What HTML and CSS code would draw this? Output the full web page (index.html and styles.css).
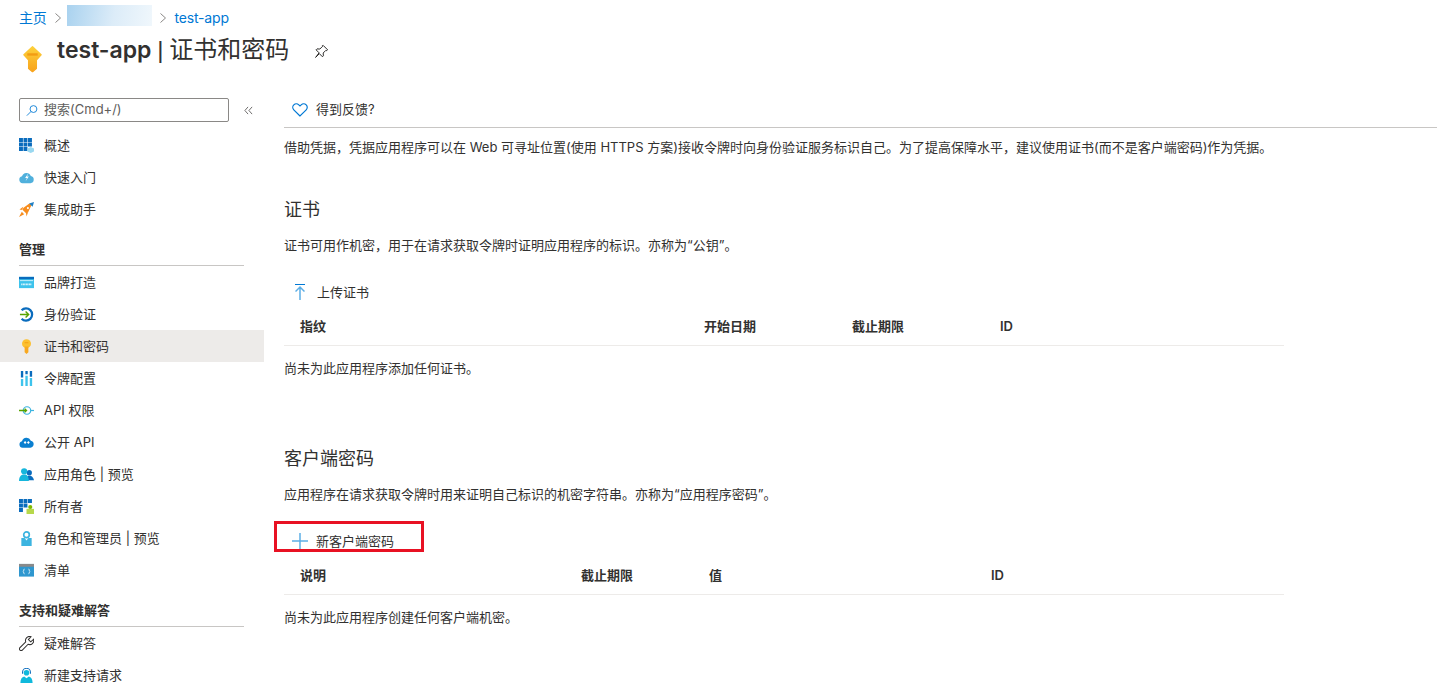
FILE: index.html
```html
<!DOCTYPE html>
<html lang="zh-CN">
<head>
    <meta charset="UTF-8">
    <meta name="viewport" content="width=device-width, initial-scale=1.0">
    <title>test-app | 证书和密码</title>
    <link rel="stylesheet" href="styles.css">
</head>
<body>
    <nav class="breadcrumb">
        <a href="#">主页</a>
        <svg class="crumb-sep" viewBox="0 0 8 12"><path d="M1.500 1.500 6.500 6l-5 4.500" /></svg>
        <span class="crumb-blur"></span>
        <svg class="crumb-sep" viewBox="0 0 8 12"><path d="M1.500 1.500 6.500 6l-5 4.500" /></svg>
        <a href="#">test-app</a>
    </nav>

    <header class="page-head">
        <svg class="head-key" viewBox="0 0 20 28">
            <defs>
                <linearGradient id="keyfill" x1="0" y1="0" x2="0" y2="1">
                    <stop offset="0" stop-color="#fdd03a" />
                    <stop offset="1" stop-color="#f8a31c" />
                </linearGradient>
            </defs>
            <path fill="url(#keyfill)" stroke="url(#keyfill)" stroke-linejoin="round" stroke-width="1.500" d="M10 1 19 9.500 14 15V24l-4 3.300L6 24V15L1 9.500z" />
            <rect x="4.500" y="8" width="11" height="2.500" fill="#f39c12" />
        </svg>
        <h1><b>test-app</b> <span class="pipe">|</span> 证书和密码</h1>
        <svg class="head-pin" viewBox="0 0 16 16"><path d="M9.800 1.500 14.500 6.200 13.600 7l-1-.2-2.800 2.800.2 3-1 1-3.300-3.300L1.700 14.300l3.700-4.900L2.200 6.200l1-1 3 .2L9 2.600 8.800 1.900z" /></svg>
    </header>

    <div class="layout">
        <aside class="sidebar">
            <div class="search-row">
                <div class="search">
                    <svg class="search-icon" viewBox="0 0 14 14"><circle cx="8.700" cy="5.300" r="4" /><path d="M5.800 8.200 1 13" /></svg>
                    <span>搜索(Cmd+/)</span>
                </div>
                <svg class="collapse" viewBox="0 0 10 10"><path d="M4.500 1 1 5l3.500 4M9 1 5.500 5 9 9" /></svg>
            </div>

            <a class="nav-item" href="#">
                <svg viewBox="0 0 16 16"><path fill="#0a6cbd" d="M0 0h4.200v4.200H0zM4.800 0H9v4.200H4.800zM9.600 0h4.200v4.200H9.600zM0 4.800h4.200V9H0zM4.800 4.800H9V9H4.800zM9.600 4.800h4.200V9H9.600zM0 9.600h4.200v4.200H0zM4.800 9.600H9v4.200H4.800z" /><path fill="#9ad8f0" d="m12.500 9.500 3.500 1.800v3L12.500 16 9 14.300v-3z" /></svg>
                概述
            </a>
            <a class="nav-item" href="#">
                <svg viewBox="0 0 16 16"><path fill="#50b0dc" d="M3.800 14a3.700 3.700 0 0 1-.6-7.300A5 5 0 0 1 12.600 6.300 3.900 3.900 0 0 1 12.200 14z" /><path fill="#fff" d="M10 3.500 6.500 8.500h2l-1.500 3.500 3.500-5h-2z" /></svg>
                快速入门
            </a>
            <a class="nav-item" href="#">
                <svg viewBox="0 0 16 16"><path fill="#f78d1e" d="M4.500 6.500 11 1.500 13.500 3 9.500 11.500 7.500 12 4 8.500zM4.500 5 .5 8 3.500 8.500zM11 7.500 8 15.500 7.500 12zM3 10.500l2.500 2.500L0 16z" /><path fill="#1f7fc4" d="M10.800 1.500 16 0l-1.500 5z" /><circle cx="9.500" cy="6.500" r="1.100" fill="#fff" /></svg>
                集成助手
            </a>

            <div class="nav-title">管理</div>
            <a class="nav-item" href="#">
                <svg viewBox="0 0 16 16"><rect y="2" width="16" height="12" fill="#3ec3ec" /><rect y="2" width="16" height="2.500" fill="#0a6cbd" /><rect x="1" y="5.500" width="14" height="1" fill="#c9f0fb" /><path class="www" d="M2.500 10h11" /></svg>
                品牌打造
            </a>
            <a class="nav-item" href="#">
                <svg viewBox="0 0 16 16"><path class="ring" d="M2.800 3.500A6.500 6.500 0 1 1 2.800 12.500" /><path class="arrow" d="M1 8h9M7 4.800 10.300 8 7 11.200" /></svg>
                身份验证
            </a>
            <a class="nav-item active" href="#">
                <svg viewBox="0 0 16 16"><circle cx="8" cy="5" r="4.800" fill="#fcc030" /><path fill="#f8a81f" d="M6 8h4v6l-2 2-2-2z" /><rect x="6" y="3.500" width="4" height="1" fill="#f39c12" /></svg>
                证书和密码
            </a>
            <a class="nav-item" href="#">
                <svg viewBox="0 0 16 16"><path fill="#0a6cbd" d="M2 0h2.500v7H2zM6.800 0h2.500v3.500H6.800zM11.500 0H14v6h-2.500z" /><path fill="#3ec3ec" d="M2 8.500h2.500V16H2zM6.800 5h2.500v11H6.800zM11.500 7.500H14V16h-2.500z" /></svg>
                令牌配置
            </a>
            <a class="nav-item" href="#">
                <svg viewBox="0 0 16 16"><circle class="api-ring" cx="8.500" cy="8" r="4" /><path class="arrow" d="M0 8h8M6 6l2 2-2 2" /><path class="api-tail" d="M12.500 8H16" /></svg>
                API 权限
            </a>
            <a class="nav-item" href="#">
                <svg viewBox="0 0 16 16"><path fill="#0a7fd0" d="M3.800 13.500a3.500 3.500 0 0 1-.6-6.900A5 5 0 0 1 12.600 6a3.800 3.800 0 0 1-.4 7.500z" /><path fill="#fff" d="m5 8 1.500-1.500L8 8 6.500 9.500zM8.500 8 10 6.500 11.500 8 10 9.500z" /></svg>
                公开 API
            </a>
            <a class="nav-item" href="#">
                <svg viewBox="0 0 16 16"><circle cx="11" cy="6" r="2.800" fill="#0a6cbd" /><path fill="#0a6cbd" d="M8 14c0-3 1-5 3-5s4.500 2 5 5z" /><circle cx="5.500" cy="4.500" r="3.300" fill="#16b6dc" /><path fill="#16b6dc" d="M0 15c0-5 2.500-7 5.500-7s5 2 5 7z" /></svg>
                应用角色 | 预览
            </a>
            <a class="nav-item" href="#">
                <svg viewBox="0 0 16 16"><path fill="#0a6cbd" d="M0 0h4.200v4.200H0zM4.800 0H9v4.200H4.800zM9.600 0h4.200v4.200H9.600zM0 4.800h4.200V9H0zM4.800 4.800H9V9H4.800zM0 9.600h4.200v4.200H0z" /><path fill="#b7d84b" d="M8 10.500h8V16H8z" /><circle cx="12" cy="8.500" r="2.200" fill="#7fba00" /></svg>
                所有者
            </a>
            <a class="nav-item" href="#">
                <svg viewBox="0 0 16 16"><path fill="#3cb4e0" d="M2.500 7.500h3.500L8 10l2-2.500h3.500V16h-11z" /><circle class="role-ring" cx="8" cy="4" r="3" /></svg>
                角色和管理员 | 预览
            </a>
            <a class="nav-item" href="#">
                <svg viewBox="0 0 16 16"><rect y="1" width="16" height="13.500" fill="#2f97cf" /><rect y="1" width="16" height="3" fill="#8a8a8a" /><path class="braces" d="M6 6.500 5 7v1.500l-.5.500.5.500V11l1 .5M10 6.500l1 .5v1.500l.5.500-.5.500V11l-1 .5" /></svg>
                清单
            </a>

            <div class="nav-title">支持和疑难解答</div>
            <a class="nav-item" href="#">
                <svg viewBox="0 0 16 16"><path class="wrench" d="M15.500 3.500 12.500 6.300 10 3.800 12.800.8A4.300 4.300 0 0 0 7.200 6.300L.8 12.700a1.800 1.800 0 0 0 2.500 2.500l6.400-6.400A4.300 4.300 0 0 0 15.500 3.500z" /></svg>
                疑难解答
            </a>
            <a class="nav-item" href="#">
                <svg viewBox="0 0 16 16"><path fill="#10b9dc" d="M1.500 16c0-4 1.500-6.500 4-7L8 11l2.500-2c2.500.5 4 3 4 7z" /><circle cx="8" cy="5" r="3" fill="#10b9dc" /><path class="headset" d="M3.800 6V4.500a4.200 4.200 0 0 1 8.400 0V6" /></svg>
                新建支持请求
            </a>
        </aside>

        <main class="content">
            <div class="toolbar">
                <svg class="heart" viewBox="0 0 16 14"><path d="M8 13 1.800 6.800A3.500 3.500 0 0 1 6.800 1.800L8 3l1.200-1.200a3.500 3.500 0 0 1 5 5z" /></svg>
                <span>得到反馈?</span>
            </div>
            <p class="intro">借助凭据，凭据应用程序可以在 Web 可寻址位置(使用 HTTPS 方案)接收令牌时向身份验证服务标识自己。为了提高保障水平，建议使用证书(而不是客户端密码)作为凭据。</p>

            <section class="section">
                <h2>证书</h2>
                <p class="section-desc">证书可用作机密，用于在请求获取令牌时证明应用程序的标识。亦称为“公钥”。</p>
                <div class="action">
                    <svg class="action-upload" viewBox="0 0 10 16"><path class="bar" d="M0 .5h10" /><path d="M5 16V3M.5 7.500 5 3l4.500 4.500" /></svg>
                    <span>上传证书</span>
                </div>
                <div class="table-head cert-cols">
                    <span>指纹</span><span>开始日期</span><span>截止期限</span><span>ID</span>
                </div>
                <p class="empty">尚未为此应用程序添加任何证书。</p>
            </section>

            <section class="section">
                <h2>客户端密码</h2>
                <p class="section-desc">应用程序在请求获取令牌时用来证明自己标识的机密字符串。亦称为“应用程序密码”。</p>
                <div class="action action-new">
                    <svg class="action-plus" viewBox="0 0 16 16"><path d="M8 0v16M0 8h16" /></svg>
                    <span>新客户端密码</span>
                    <div class="highlight"></div>
                </div>
                <div class="table-head secret-cols">
                    <span>说明</span><span>截止期限</span><span>值</span><span>ID</span>
                </div>
                <p class="empty">尚未为此应用程序创建任何客户端机密。</p>
            </section>
        </main>
    </div>
</body>
</html>
```

FILE: styles.css
```css
body {
    font-family: Inter, "Noto Sans CJK SC", sans-serif;
    font-size: 13px;
    line-height: 20px;
    margin: 0;
    height: 700px;
    overflow: hidden;
    color: #323130;
    background: #fff;
}
a {
    color: inherit;
    text-decoration: none;
}
p {
    margin: 0;
}

/* breadcrumb + title */
.breadcrumb {
    display: flex;
    align-items: center;
    height: 36px;
    padding-left: 19px;
    font-size: 14px;
    letter-spacing: -.2px;
    color: #0078d4;
}
.crumb-sep {
    width: 8px;
    height: 12px;
    margin: 0 5px 0 7px;
    fill: none;
    stroke: #8a8886;
}
.crumb-blur {
    width: 85px;
    height: 21px;
    margin-top: -5px;
    background: linear-gradient(100deg, #a9d2ef, #dcecf8 55%, #f0f7fc);
}
.crumb-blur + .crumb-sep {
    margin-right: 8px;
}
.page-head {
    display: flex;
    align-items: flex-start;
    height: 56px;
    padding-left: 23px;
}
.head-key {
    width: 19px;
    height: 28px;
    margin-top: 9px;
    flex: none;
}
h1 {
    margin: 0 0 0 15px;
    font-size: 24px;
    line-height: 28px;
    font-weight: 400;
    white-space: nowrap;
    word-spacing: -1px;
}
h1 b {
    font-size: 23px;
    font-weight: 600;
}
.pipe {
    font-family: "Liberation Sans", sans-serif;
}
.head-pin {
    width: 15px;
    height: 15px;
    margin: 8px 0 0 25px;
    fill: none;
    stroke: #201f1e;
    stroke-width: 1;
}

.layout {
    display: flex;
}

/* left menu */
.sidebar {
    width: 264px;
    flex: none;
    padding-top: 6px;
}
.search-row {
    display: flex;
    align-items: center;
    padding-left: 19px;
    margin-bottom: 7px;
}
.search {
    display: flex;
    align-items: center;
    gap: 6px;
    box-sizing: border-box;
    width: 210px;
    height: 24px;
    padding-left: 6px;
    border: 1px solid #8a8886;
    border-radius: 2px;
    color: #605e5c;
}
.search span {
    padding-bottom: 2px;
}
.search-icon {
    width: 12px;
    height: 13px;
    fill: none;
    stroke: #0078d4;
}
.collapse {
    width: 9px;
    height: 9px;
    margin-left: 15px;
    fill: none;
    stroke: #605e5c;
}
.nav-item {
    display: flex;
    align-items: center;
    gap: 10px;
    height: 32px;
    padding-left: 19px;
}
.nav-item svg {
    width: 15px;
    height: 15px;
    flex: none;
}
.nav-item.active {
    background: #edebe9;
}
.nav-title {
    margin: 14px 20px 0 19px;
    padding-bottom: 6px;
    border-bottom: 1px solid #c8c6c4;
    font-weight: 600;
}
.www {
    stroke: #fff;
    stroke-width: 2;
    stroke-dasharray: 1 .6;
}
.ring {
    fill: none;
    stroke: #0a6cbd;
    stroke-width: 2.400;
}
.arrow {
    fill: none;
    stroke: #57a300;
    stroke-width: 1.500;
}
.api-ring {
    fill: none;
    stroke: #3cb4e0;
    stroke-width: 1.300;
}
.api-tail {
    stroke: #3cb4e0;
    stroke-width: 1.300;
}
.role-ring {
    fill: #fff;
    stroke: #3cb4e0;
    stroke-width: 1.800;
}
.braces {
    fill: none;
    stroke: #fff;
    stroke-width: .8;
}
.wrench {
    fill: none;
    stroke: #323130;
    stroke-width: 1.100;
}
.headset {
    fill: none;
    stroke: #0a6cbd;
    stroke-width: 1.100;
}

/* main area */
.content {
    flex: 1;
    margin-left: 20px;
    min-width: 0;
}
.toolbar {
    display: flex;
    align-items: center;
    height: 35px;
    padding-left: 8px;
    border-bottom: 1px solid #c8c6c4;
}
.toolbar span {
    padding-bottom: 2px;
}
.heart {
    width: 16px;
    height: 14px;
    margin-right: 8px;
    fill: none;
    stroke: #0078d4;
    stroke-width: 1.200;
}
.intro {
    margin-top: 9px;
}
.section {
    width: 1000px;
    margin-top: 39px;
}
.section + .section {
    margin-top: 67px;
}
h2 {
    margin: 0;
    padding-top: 2px;
    font-size: 18px;
    line-height: 24px;
    font-weight: 400;
}
.section-desc {
    margin-top: 13px;
}
.action {
    position: relative;
    display: flex;
    align-items: center;
    height: 32px;
    margin-top: 21px;
}
.action svg {
    fill: none;
    stroke: #5caee6;
    stroke-width: 1.500;
    flex: none;
}
.action-upload {
    width: 10px;
    height: 16px;
    margin: 0 12px 0 11px;
}
.action-upload .bar {
    stroke: #0078d4;
    stroke-width: 1;
}
.action-plus {
    width: 16px;
    height: 16px;
    margin: 0 8px;
}
/* red box drawn on top of the screenshot */
.highlight {
    position: absolute;
    top: -4px;
    left: -10px;
    width: 150px;
    height: 31px;
    box-sizing: border-box;
    border: 3px solid #e81123;
}
.table-head {
    display: grid;
    align-items: center;
    box-sizing: border-box;
    height: 38px;
    padding: 0 0 2px 16px;
    border-bottom: 1px solid #edebe9;
    font-weight: 600;
}
.cert-cols {
    grid-template-columns: 404px 148px 148px 1fr;
}
.secret-cols {
    grid-template-columns: 281px 128px 282px 1fr;
}
.empty {
    margin-top: 12px;
}
```
